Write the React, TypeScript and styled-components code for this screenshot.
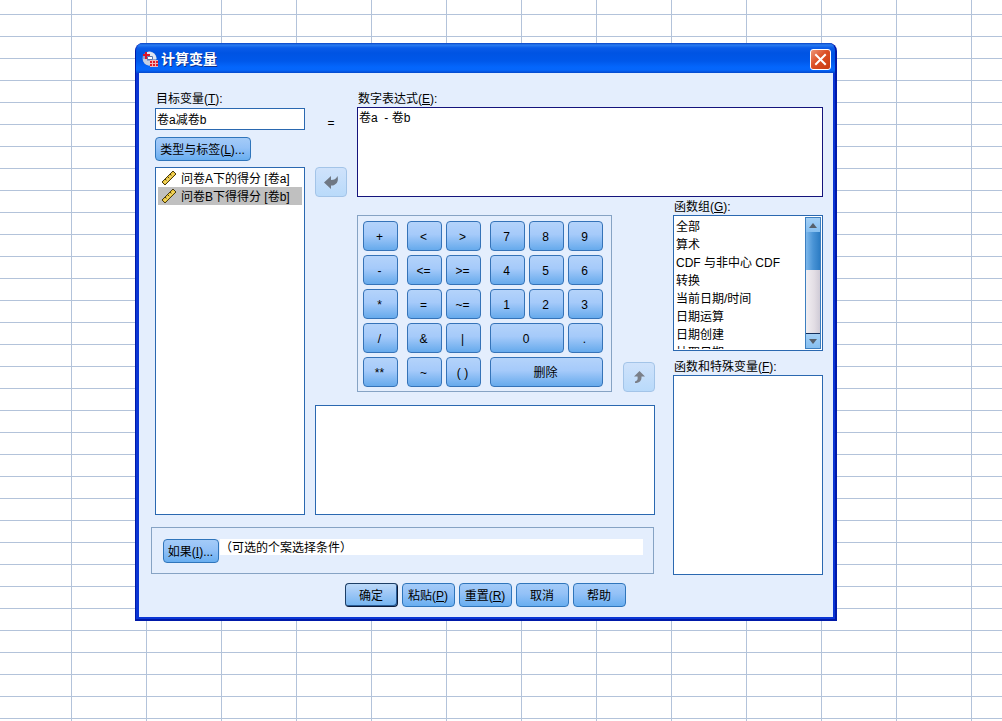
import React, { useRef, useState } from 'react';
import styled, { createGlobalStyle, css } from 'styled-components';

const GlobalStyle = createGlobalStyle`
  *, *::before, *::after { box-sizing: border-box; }
  body {
    margin: 0;
    background: #fff;
    color: #000;
    font-family: "Liberation Sans", "Noto Sans CJK SC", sans-serif;
    font-size: 12px;
    line-height: 16px;
  }
  button, input, textarea { font: inherit; color: inherit; margin: 0; }
  ul { list-style: none; margin: 0; padding: 0; }
`;

const Sheet = styled.main`
  min-height: 100vh;
  padding: 43px 165px 43px 135px;
  background-color: #fff;
  background-image:
    linear-gradient(#b3c3da 1px, transparent 1px),
    linear-gradient(90deg, #b3c3da 1px, transparent 1px);
  background-size: 75px 22px;
  background-position: 0 14px, 71px 0;
`;

const Dialog = styled.section`
  min-width: 702px;
  border-radius: 8px 8px 0 0;
  background: #0a35d4;
  border: solid;
  border-width: 0 2px 2px 1px;
  border-color: #0019a8;
  overflow: hidden;
`;

const TitleBar = styled.header`
  display: flex;
  align-items: center;
  gap: 3px;
  height: 30px;
  padding: 2px 4px 0 6px;
  background: linear-gradient(
    #0842c4 0, #2a7cf0 2px, #0a5be8 5px, #0054e3 10px,
    #0058ea 18px, #0466fc 24px, #0566fb 27px, #0348cc 30px
  );
`;

const Title = styled.h1`
  flex: 1;
  margin: 0;
  color: #fff;
  font-size: 14px;
  line-height: 20px;
  font-weight: 700;
  text-shadow: 1px 1px 0 #0b2f8c;
`;

const CloseButton = styled.button`
  display: grid;
  place-items: center;
  width: 21px;
  height: 21px;
  padding: 0;
  border: 1px solid #fff;
  border-radius: 3px;
  background: linear-gradient(135deg, #ee9678, #dc4f26 45%, #c83a10);
`;

const Body = styled.div`
  margin: 0 2px 2px 3px;
  padding: 18px 0 10px;
  background: #e4eefd;
`;

const Fields = styled.div`
  display: grid;
  grid-template-columns: 150px 32px minmax(298px, 1fr) 158px;
  grid-template-rows: auto 1fr auto;
  column-gap: 10px;
  padding: 0 10px 0 16px;
`;

const VariableColumn = styled.div`
  grid-column: 1;
  grid-row: 1 / 3;
  display: flex;
  flex-direction: column;
  align-items: stretch;
`;

const InsertColumn = styled.div`
  grid-column: 2;
  grid-row: 1;
  display: flex;
  flex-direction: column;
  align-items: center;
  justify-content: flex-end;
  gap: 36px;
  padding-bottom: 2px;
`;

const ExpressionColumn = styled.div`
  grid-column: 3 / 5;
  grid-row: 1;
  padding-bottom: 2px;
`;

const Workspace = styled.div`
  grid-column: 2 / 4;
  grid-row: 2;
  display: flex;
  flex-direction: column;
  gap: 13px;
  padding-top: 16px;
`;

const FunctionColumn = styled.div`
  grid-column: 4;
  grid-row: 2 / 4;
  display: flex;
  flex-direction: column;
  padding-left: 8px;
`;

const Label = styled.label<{ $spaced?: boolean }>`
  display: block;
  height: 16px;
  margin-top: ${(p) => (p.$spaced ? 8 : 0)}px;
  padding-left: 1px;
  white-space: nowrap;
`;

const TextInput = styled.input`
  width: 100%;
  height: 22px;
  margin: 1px 0 7px;
  padding: 0 1px 1px;
  border: 1px solid #2a68b0;
  background: #fff;
`;

const ExpressionInput = styled.textarea`
  display: block;
  width: 100%;
  height: 90px;
  padding: 2px 1px;
  border: 1px solid #14147c;
  outline: none;
  resize: none;
  background: #fff;
`;

const boxed = css`
  border: 1px solid #2a68b0;
  background: #fff;
`;

const VariableList = styled.ul`
  ${boxed}
  flex: 1;
  margin-top: 6px;
  padding: 1px 2px;
`;

const VariableItem = styled.li<{ $selected: boolean }>`
  display: flex;
  align-items: center;
  gap: 4px;
  height: 18px;
  padding-left: 3px;
  line-height: 18px;
  white-space: nowrap;
  background: ${(p) => (p.$selected ? '#c0c0c0' : 'transparent')};
`;

const VariableName = styled.span`
  padding-top: 2px;
`;

const EmptyPane = styled.div<{ $height?: number }>`
  ${boxed}
  ${(p) => (p.$height ? `height: ${p.$height}px;` : 'flex: 1; min-height: 100px;')}
`;

const PushButton = styled.button<{ $width: number; $primary?: boolean }>`
  width: ${(p) => p.$width}px;
  height: 24px;
  padding: 2px 1px 0 0;
  border: 1px solid #2f75bb;
  border-radius: 4px;
  white-space: nowrap;
  background: linear-gradient(#a4cbf8, #93c1f7 45%, #68aef0);
  ${(p) =>
    p.$primary &&
    css`
      border-color: #1c3e66 #0a1a38 #0a1a38 #1c3e66;
      box-shadow: inset -1px -1px 0 #2a5c96;
      background: linear-gradient(#bcd9f8, #9cc6f6 45%, #74b4f0);
    `}
`;

const ArrowButton = styled.button`
  display: grid;
  place-items: center;
  width: 32px;
  height: 30px;
  padding: 0;
  border: 1px solid #a3c4e8;
  border-radius: 4px;
  background: linear-gradient(#cfe2fb, #b9dafa);
`;

const KeyRow = styled.div`
  display: flex;
  align-items: flex-end;
  justify-content: space-between;
  padding-left: 42px;
`;

const Keypad = styled.div`
  display: flex;
  gap: 9px;
  padding: 5px 8px 4px 5px;
  border: 1px solid #86a3c4;
`;

const KeyGroup = styled.div<{ $columns: number }>`
  display: grid;
  grid-template-columns: repeat(${(p) => p.$columns}, 35px);
  grid-auto-rows: 30px;
  gap: 4px;
`;

const Key = styled.button<{ $span?: number }>`
  grid-column: span ${(p) => p.$span ?? 1};
  padding: 1px 2px 0 0;
  border: 1px solid #3573b8;
  border-radius: 4px;
  background: linear-gradient(#b4d3fa, #a5cafa 45%, #66aaec);
`;

const ConditionPanel = styled.div`
  grid-column: 1 / 4;
  grid-row: 3;
  display: flex;
  align-items: flex-start;
  gap: 1px;
  margin: 12px 1px 1px -4px;
  padding: 11px 10px 10px 11px;
  border: 1px solid #86a3c4;
`;

const ConditionText = styled.span`
  flex: 1;
  height: 16px;
  line-height: 18px;
  background: #fff;
`;

const Footer = styled.footer`
  display: flex;
  justify-content: center;
  gap: 4px;
  padding: 8px 1px 0 0;
`;

const ListFrame = styled.div`
  ${boxed}
  display: flex;
  height: 136px;
  padding: 1px;
`;

const FunctionList = styled.ul`
  flex: 1;
  overflow-y: auto;
  scrollbar-width: none;
  padding: 1px 0 0 1px;
`;

const FunctionItem = styled.li`
  height: 18px;
  line-height: 18px;
  white-space: nowrap;
`;

const ScrollBar = styled.div`
  display: flex;
  flex-direction: column;
  width: 16px;
  border: 1px solid #3d7fc0;
`;

const ScrollArrow = styled.button`
  display: grid;
  place-items: center;
  height: 14px;
  padding: 0;
  border: 0;
  background: linear-gradient(#a4d0f6, #86bff0);
`;

const ScrollTrack = styled.div`
  flex: 1;
  border-bottom: 1px solid #14305c;
  background: linear-gradient(90deg, #f2eff2, #e2dde4 60%, #cfcbd6);
`;

const ScrollThumb = styled.div`
  height: 38px;
  background: linear-gradient(90deg, #7db8ec, #4a94d6 50%, #2c7cc4);
`;

const AppIcon = () => (
  <svg width="16" height="16" viewBox="0 0 16 16" aria-hidden="true">
    <circle cx="7.500" cy="7.500" r="7" fill="#8fa6d0" />
    <path d="M4 1.500C8-.5 14 2 14.500 8H8V4H4z" fill="#dfe6f2" />
    <path d="M1 8h4v2h3v4.500C4 14.500 1 12 1 8z" fill="#c3cfe4" />
    <path d="M4 1v7M1 4h7" stroke="#d8142c" strokeWidth="2" />
    <path d="M5.500 5.500h5v3h-5z" fill="#fff" stroke="#5d78ae" />
    <rect x="8" y="9" width="8" height="7" fill="#f0b4b8" />
    <path d="M8 10h2v2H8zM11 10h2v2h-2zM14 10h2v2h-2zM8 13h2v2H8zM11 13h2v2h-2zM14 13h2v2h-2z" fill="#e01c2c" />
  </svg>
);

const CloseIcon = () => (
  <svg width="13" height="13" viewBox="0 0 13 13" aria-hidden="true">
    <path d="M2 2l9 9M11 2l-9 9" stroke="#fff" strokeWidth="2" strokeLinecap="square" />
  </svg>
);

const RulerIcon = () => (
  <svg width="16" height="16" viewBox="0 0 16 16" aria-hidden="true">
    <path d="M1 12L12 1l3 3L4 15z" fill="#e8c43c" stroke="#4a3c10" strokeLinejoin="round" />
    <path d="M4 9l2 2M6.500 6.500l2 2M9 4l2 2" stroke="#4a3c10" />
    <path d="M3.500 13L13 3.500" stroke="#fbe68c" />
  </svg>
);

const InsertIcon = () => (
  <svg width="14" height="14" viewBox="0 0 14 14" aria-hidden="true">
    <path d="M0 7.500L7 1v4c3 0 5-1 6.500-4C15 7 12 10.500 7 10.500V14z" fill="#6f7884" />
  </svg>
);

const UpIcon = () => (
  <svg width="12" height="14" viewBox="0 0 12 14" aria-hidden="true">
    <path d="M6.500 1L12 6.500H8.500c.2 4-1.500 6.500-6.500 6.500v-1.500c2.500-.5 3-2.500 2.500-5H1z" fill="#7a7f88" />
  </svg>
);

const ScrollIcon = ({ down }: { down?: boolean }) => (
  <svg width="8" height="5" viewBox="0 0 8 5" aria-hidden="true">
    <path d={down ? 'M0 0h8L4 5z' : 'M0 5h8L4 0z'} fill="#56606c" />
  </svg>
);

type KeyDef = { text: string; span?: number };

const keyGroups: { columns: number; keys: KeyDef[] }[] = [
  { columns: 1, keys: ['+', '-', '*', '/', '**'].map((text) => ({ text })) },
  {
    columns: 2,
    keys: ['<', '>', '<=', '>=', '=', '~=', '&', '|', '~', '( )'].map((text) => ({ text })),
  },
  {
    columns: 3,
    keys: [
      ...['7', '8', '9', '4', '5', '6', '1', '2', '3'].map((text) => ({ text })),
      { text: '0', span: 2 },
      { text: '.' },
      { text: '删除', span: 3 },
    ],
  },
];

const variables = ['问卷A下的得分 [卷a]', '问卷B下得得分 [卷b]'];

const functionGroups = [
  '全部', '算术', 'CDF 与非中心 CDF', '转换', '当前日期/时间', '日期运算', '日期创建', '抽取日期',
];

export default function App() {
  const [target, setTarget] = useState('卷a减卷b');
  const [expression, setExpression] = useState('卷a  - 卷b');
  const [selected, setSelected] = useState(1);
  const groupsRef = useRef<HTMLUListElement>(null);
  const scrollGroups = (amount: number) => groupsRef.current?.scrollBy({ top: amount });

  return (
    <>
      <GlobalStyle />
      <Sheet>
        <Dialog role="dialog" aria-labelledby="dialog-title">
          <TitleBar>
            <AppIcon />
            <Title id="dialog-title">计算变量</Title>
            <CloseButton type="button" aria-label="关闭"><CloseIcon /></CloseButton>
          </TitleBar>
          <Body>
            <Fields>
              <VariableColumn>
                <Label htmlFor="target">目标变量(<u>T</u>):</Label>
                <TextInput id="target" value={target} onChange={(e) => setTarget(e.target.value)} />
                <PushButton type="button" $width={96}>类型与标签(<u>L</u>)...</PushButton>
                <VariableList role="listbox" aria-label="变量">
                  {variables.map((name, i) => (
                    <VariableItem
                      key={name}
                      role="option"
                      aria-selected={selected === i}
                      $selected={selected === i}
                      onClick={() => setSelected(i)}
                    >
                      <RulerIcon />
                      <VariableName>{name}</VariableName>
                    </VariableItem>
                  ))}
                </VariableList>
              </VariableColumn>

              <InsertColumn>
                <span>=</span>
                <ArrowButton type="button" aria-label="移入表达式"><InsertIcon /></ArrowButton>
              </InsertColumn>

              <ExpressionColumn>
                <Label htmlFor="expression">数字表达式(<u>E</u>):</Label>
                <ExpressionInput
                  id="expression"
                  value={expression}
                  spellCheck={false}
                  onChange={(e) => setExpression(e.target.value)}
                />
              </ExpressionColumn>

              <Workspace>
                <KeyRow>
                  <Keypad>
                    {keyGroups.map((group) => (
                      <KeyGroup key={group.columns} $columns={group.columns}>
                        {group.keys.map((k) => (
                          <Key key={k.text} type="button" $span={k.span}>{k.text}</Key>
                        ))}
                      </KeyGroup>
                    ))}
                  </Keypad>
                  <ArrowButton type="button" aria-label="移入函数"><UpIcon /></ArrowButton>
                </KeyRow>
                <EmptyPane $height={110} />
              </Workspace>

              <FunctionColumn>
                <Label as="span" id="groups-label">函数组(<u>G</u>):</Label>
                <ListFrame>
                  <FunctionList ref={groupsRef} role="listbox" aria-labelledby="groups-label">
                    {functionGroups.map((name) => (
                      <FunctionItem key={name} role="option" aria-selected={false}>{name}</FunctionItem>
                    ))}
                  </FunctionList>
                  <ScrollBar>
                    <ScrollArrow type="button" aria-label="向上" onClick={() => scrollGroups(-18)}>
                      <ScrollIcon />
                    </ScrollArrow>
                    <ScrollTrack><ScrollThumb /></ScrollTrack>
                    <ScrollArrow type="button" aria-label="向下" onClick={() => scrollGroups(18)}>
                      <ScrollIcon down />
                    </ScrollArrow>
                  </ScrollBar>
                </ListFrame>
                <Label as="span" id="functions-label" $spaced>函数和特殊变量(<u>F</u>):</Label>
                <EmptyPane role="listbox" aria-labelledby="functions-label" />
              </FunctionColumn>

              <ConditionPanel>
                <PushButton type="button" $width={56}>如果(<u>I</u>)...</PushButton>
                <ConditionText>（可选的个案选择条件）</ConditionText>
              </ConditionPanel>
            </Fields>

            <Footer>
              <PushButton type="button" $width={53} $primary>确定</PushButton>
              <PushButton type="button" $width={53}>粘贴(<u>P</u>)</PushButton>
              <PushButton type="button" $width={53}>重置(<u>R</u>)</PushButton>
              <PushButton type="button" $width={53}>取消</PushButton>
              <PushButton type="button" $width={53}>帮助</PushButton>
            </Footer>
          </Body>
        </Dialog>
      </Sheet>
    </>
  );
}
